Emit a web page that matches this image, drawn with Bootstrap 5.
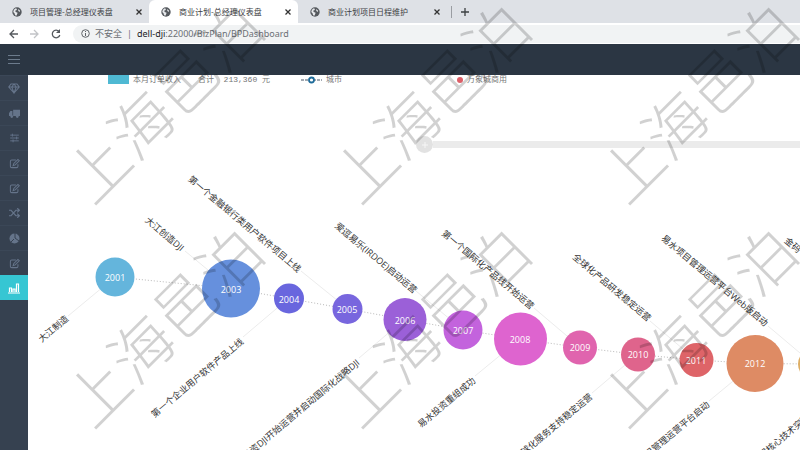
<!DOCTYPE html>
<html lang="zh-CN">
<head>
<meta charset="utf-8">
<meta name="viewport" content="width=device-width, initial-scale=1">
<title>商业计划-总经理仪表盘</title>
<link href="https://cdn.jsdelivr.net/npm/bootstrap@5.3.0/dist/css/bootstrap.min.css" rel="stylesheet">
<style>
body{font-family:"Open Sans","Noto Sans CJK SC",sans-serif;font-size:9px;line-height:12px;color:#333;background:#fff}
button,input{font:inherit;color:inherit}
.plain{border:0;background:none;padding:0;display:flex;align-items:center}
.tabstrip{background:#dee1e6;height:23px}
.btab{width:149px;padding:0 6px 0 12px;font-size:8px;color:#3c4043;font-family:"Noto Sans CJK SC",sans-serif}
.btab.on{background:#fff;border-radius:6px 6px 0 0}
.sep{width:1px;height:12px;background:#9a9da2}
.tools{height:21px;padding-left:9px;gap:12px;color:#5f6368}
.address{background:#f1f3f4;height:18px;padding-left:8px;gap:5px;border-radius:9px 0 0 9px;font-family:"Noto Sans","Noto Sans CJK SC",sans-serif;color:#6b6f74}
.address input{background:none;border:0;outline:0;padding:0;min-width:0;color:#55595e}
.host{color:#202124}
.appbar{background:#2b3643;height:31px;padding-left:8px;color:#6c7b8c}
.side{width:28px;background:#364150;color:#65748a}
.side a{height:25px;color:inherit;border-top:1px solid #3b4757;display:flex;align-items:center;justify-content:center}
.side a.on{background:#36c6d3;color:#fff;border-color:#36c6d3}
.legends{height:9px;font-size:8px;line-height:8px;color:#777;padding-left:80px;font-family:"Liberation Mono","Noto Sans CJK SC",monospace}
.swatch{width:21px;height:9px;background:#4fb9d3}
.gap-total{margin-left:17px}.gap-city{margin-left:31px}.gap-red{margin-left:115px}
.slide{padding:52px 0 0 388px}
.knob{width:17px;height:17px;border-radius:50%;background:#e2e2e2;justify-content:center;color:#f6f6f6}
.rail{height:7px;background:#ebebeb}
.board{position:relative}
.timeline{display:block;width:772px;height:296px;overflow:visible}
.years text{fill:#fff;text-anchor:middle;dominant-baseline:central}
.names text{fill:#333;dominant-baseline:central;font-size:9px}
.overlay{position:absolute;inset:0;width:100%;height:100%;pointer-events:none}
.overlay text{font-family:"Noto Sans CJK SC",sans-serif;font-size:62px;font-weight:300;text-anchor:middle;dominant-baseline:central;fill:#000;fill-opacity:.18}
</style>
<script src="https://cdn.jsdelivr.net/npm/bootstrap@5.3.0/dist/js/bootstrap.bundle.min.js"></script>
</head>
<body class="position-relative vh-100 overflow-hidden d-flex flex-column">
<svg class="d-none">
<symbol id="globe" viewBox="0 0 16 16"><circle cx="8" cy="8" r="7.5" fill="#55595e"/><path d="M3 4.500l3-2.500 2 1-1 2-2 1 1 2 3 1-1 3-1 2-2-1-1-3-2-2zM10 3l3 3-1 2-2-2z" fill="#e6e8eb"/></symbol>
<symbol id="close" viewBox="0 0 8 8"><path d="M1.500 1.500l5 5M6.500 1.500l-5 5" stroke="#333" stroke-width="1.300"/></symbol>
<symbol id="edit" viewBox="0 0 16 16"><path d="M10 3H4Q2 3 2 5v7q0 2 2 2h7q2 0 2-2V9" fill="none" stroke="currentColor" stroke-width="1.500"/><path d="M6 11l1-3 6-6 2 2-6 6z" fill="none" stroke="currentColor" stroke-width="1.500"/></symbol>
</svg>
<div class="tabstrip d-flex align-items-stretch flex-shrink-0" role="tablist">
<div class="btab d-flex align-items-center"><svg width="10" height="10" class="me-1"><use href="#globe"/></svg><span class="ms-1 flex-grow-1">项目管理-总经理仪表盘</span><button class="plain" aria-label="关闭"><svg width="8" height="8"><use href="#close"/></svg></button></div>
<div class="btab on d-flex align-items-center"><svg width="10" height="10" class="me-1"><use href="#globe"/></svg><span class="ms-1 flex-grow-1">商业计划-总经理仪表盘</span><button class="plain" aria-label="关闭"><svg width="8" height="8"><use href="#close"/></svg></button></div>
<div class="btab d-flex align-items-center"><svg width="10" height="10" class="me-1"><use href="#globe"/></svg><span class="ms-1 flex-grow-1">商业计划项目日程维护</span><button class="plain" aria-label="关闭"><svg width="8" height="8"><use href="#close"/></svg></button></div>
<div class="d-flex align-items-center ms-1"><span class="sep"></span><button class="plain ms-2" aria-label="新标签页"><svg width="10" height="10"><path d="M5 1v8M1 5h8" stroke="#3c4043" stroke-width="1.300"/></svg></button></div>
</div>
<div class="tools d-flex align-items-center flex-shrink-0">
<button class="plain" aria-label="后退"><svg width="9" height="10" fill="none" stroke="#55595e" stroke-width="1.300"><path d="M9 5H1M5 1L1 5l4 4"/></svg></button>
<button class="plain" aria-label="前进"><svg width="9" height="10" fill="none" stroke="#c2c4c7" stroke-width="1.300"><path d="M0 5h8M4 1l4 4-4 4"/></svg></button>
<button class="plain" aria-label="刷新"><svg width="10" height="10" fill="none" stroke="#55595e" stroke-width="1.300"><path d="M8 2.500A3.800 3.800 0 1 0 8.800 6"/><path d="M9 0v4H5z" fill="#55595e" stroke="none"/></svg></button>
<div class="address d-flex align-items-center flex-grow-1"><svg width="9" height="9" fill="none" stroke="#5f6368"><circle cx="4.500" cy="4.500" r="3.800"/><path d="M4.500 4v3M4.500 2v1"/></svg><span>不安全</span><span>|</span><span class="flex-grow-1"><span class="host">dell-dji</span>:22000/BizPlan/BPDashboard</span></div>
</div>
<header class="appbar d-flex align-items-center flex-shrink-0"><button class="plain" aria-label="菜单"><svg width="12" height="10" stroke="currentColor"><path d="M0 .5h12M0 4.500h12M0 8.500h12"/></svg></button></header>
<div class="d-flex flex-grow-1">
<nav class="side flex-shrink-0" aria-label="主菜单">
<a href="#" aria-label="产品"><svg width="12" height="11" viewBox="0 0 16 14" fill="none" stroke="currentColor" stroke-width="1.400"><path d="M4 1h8l3 4-7 8-7-8zM1 5h14M5 5l3 8 3-8-3-4z"/></svg></a>
<a href="#" aria-label="物流"><svg width="11" height="9" viewBox="0 0 16 13" fill="currentColor"><path d="M6 1h10v9H6zM0 10V6l2-3h3v7z"/><circle cx="4" cy="11" r="2"/><circle cx="12" cy="11" r="2"/></svg></a>
<a href="#" aria-label="设置"><svg width="11" height="10" viewBox="0 0 14 14" stroke="currentColor" stroke-width="1.300"><path d="M1 3h12M1 7h12M1 11h12M4 1v4M10 5v4M5 9v4"/></svg></a>
<a href="#" aria-label="编辑"><svg width="11" height="11"><use href="#edit"/></svg></a>
<a href="#" aria-label="填报"><svg width="11" height="11"><use href="#edit"/></svg></a>
<a href="#" aria-label="流程"><svg width="11" height="10" viewBox="0 0 16 14" fill="none" stroke="currentColor" stroke-width="1.700"><path d="M0 3h3l7 8h5M0 11h3l7-8h5M12 0l3 3-3 3M12 8l3 3-3 3"/></svg></a>
<a href="#" aria-label="统计"><svg width="11" height="11"><circle cx="5.500" cy="5.500" r="5" fill="currentColor"/><path d="M6 0v5l4 3M5 6l-3 3" stroke="#364150" fill="none"/></svg></a>
<a href="#" aria-label="登记"><svg width="11" height="11"><use href="#edit"/></svg></a>
<a href="#" class="on" aria-label="仪表盘"><svg width="12" height="11" fill="none" stroke="#fff" stroke-width="1.200"><path d="M0 10h12M1.500 9V5h2v4M5 9V6h2v3M8.500 9V1h2v8"/></svg></a>
</nav>
<main class="flex-grow-1 overflow-hidden">
<div class="legends d-flex align-items-center text-nowrap overflow-hidden">
<span class="swatch"></span><span class="ms-1">本月订单收入</span><span class="gap-total">合计&nbsp; 213,360 元</span>
<svg class="gap-city" width="21" height="8"><path d="M0 4h21" stroke="#456" stroke-dasharray="3 1"/><circle cx="10.500" cy="4" r="2.500" fill="#fff" stroke="#1f6c9a" stroke-width="1.800"/></svg><span class="ms-1">城市</span>
<svg class="gap-red" width="6" height="8"><circle cx="3" cy="4" r="3" fill="#dc5f68"/></svg><span class="ms-1">万象城商用</span>
</div>
<div class="slide d-flex align-items-center"><button class="plain knob" aria-label="拖动"><svg width="8" height="8" stroke="currentColor"><path d="M4 1v6M1 4h6"/></svg></button><div class="rail flex-grow-1"></div></div>
<svg class="timeline" viewBox="28 153 772 296" role="img" aria-label="发展历程">
<path d="M115 277L231 288.500 289 298.500 347.500 309 405 319.500 463 330 520.500 339 580 347.500 638 354.500 696.500 360 755 363.500 813 364" fill="none" stroke="#b9b9b9" stroke-dasharray="1 2"/>
<g stroke="#ececec" fill="none"><path d="M115 277L68 316M231 289L185 251M289 298L243 337M348 309L301 271M405 319L359 358M463 330L416 291M520 339L475 376M580 347L534 308M638 354L592 393M696 360L650 321M755 363L709 401M813 364L768 326"/></g>
<g>
<circle cx="115" cy="277" r="19.500" fill="#64b5dc"/><circle cx="231" cy="288.500" r="29" fill="#6690dd"/><circle cx="289" cy="298.500" r="15" fill="#6966de"/><circle cx="347.500" cy="309" r="15" fill="#7866de"/><circle cx="405" cy="319.500" r="21.500" fill="#9b60d8"/><circle cx="463" cy="330" r="19.500" fill="#c363dd"/><circle cx="520.500" cy="339" r="26.500" fill="#de64cf"/><circle cx="580" cy="347.500" r="17" fill="#e064ae"/><circle cx="638" cy="354.500" r="17" fill="#df648c"/><circle cx="696.500" cy="360" r="17" fill="#de6468"/><circle cx="755" cy="363.500" r="28.500" fill="#de8b64"/><circle cx="813" cy="364" r="15" fill="#deae64"/>
</g>
<g class="years"><text x="115" y="277">2001</text><text x="231" y="289">2003</text><text x="289" y="299">2004</text><text x="347" y="309">2005</text><text x="405" y="320">2006</text><text x="463" y="330">2007</text><text x="520" y="339">2008</text><text x="580" y="347">2009</text><text x="638" y="354">2010</text><text x="696" y="360">2011</text><text x="755" y="363">2012</text></g>
<g class="names" text-anchor="end">
<text transform="translate(183 249) rotate(40)">大江创造DJI</text>
<text transform="translate(300 270) rotate(40)">第一个金融银行类用户软件项目上线</text>
<text transform="translate(416 291) rotate(40)">爱逗易乐(IRDOE)启动运营</text>
<text transform="translate(533 307) rotate(40)">第一个国际化产品线开始运营</text>
<text transform="translate(650 319) rotate(40)">全球化产品研发稳定运营</text>
<text transform="translate(767 324) rotate(40)">易水项目管理运营平台Web版启动</text>
<text transform="translate(67 317) rotate(-40)">大江制造</text>
<text transform="translate(242 340) rotate(-40)">第一个企业用户软件产品上线</text>
<text transform="translate(358 361) rotate(-40)">投资DJI开始运营并启动国际化战略DJI</text>
<text transform="translate(474 379) rotate(-40)">易水投资重组成功</text>
<text transform="translate(591 395) rotate(-40)">全球化服务支持稳定运营</text>
<text transform="translate(708 403) rotate(-40)">项目管理运营平台启动</text>
</g>
<g class="names"><text transform="translate(786 239) rotate(40)">金码</text><text transform="translate(760 456) rotate(-40)">国核心技术突破</text></g>
</svg>
</main>
</div>
<svg class="overlay" aria-hidden="true">
<text transform="translate(161 100) rotate(-45)">上海邑泊</text><text transform="translate(428 100) rotate(-45)">上海邑泊</text><text transform="translate(695 100) rotate(-45)">上海邑泊</text>
<text transform="translate(161 324) rotate(-45)">上海邑泊</text><text transform="translate(428 324) rotate(-45)">上海邑泊</text><text transform="translate(695 324) rotate(-45)">上海邑泊</text>
</svg>
</body>
</html>
